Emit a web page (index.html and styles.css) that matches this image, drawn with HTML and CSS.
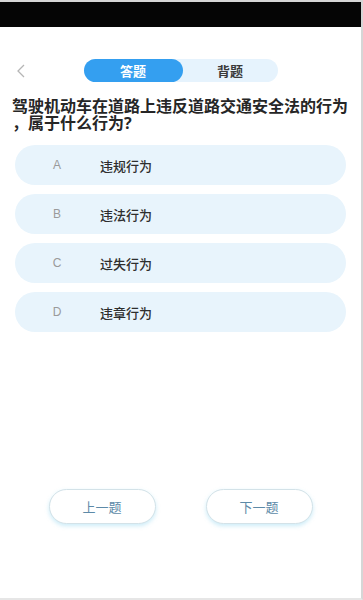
FILE: index.html
```html
<!DOCTYPE html>
<html lang="zh-CN">
<head>
<meta charset="utf-8">
<link rel="stylesheet" href="styles.css">
</head>
<body>
<div class="frame">
  <div class="statusbar"></div>
  <div class="nav">
    <div class="back">
      <svg width="10" height="14" viewBox="0 0 10 14"><path d="M8 1 L2 7 L8 13" fill="none" stroke="#b5b5b5" stroke-width="1.3"/></svg>
    </div>
    <div class="toggle">
      <span class="seg active">答题</span>
      <span class="seg">背题</span>
    </div>
    <div></div>
  </div>
  <div class="question">驾驶机动车在道路上违反道路交通安全法的行为，属于什么行为?</div>
  <div class="options">
    <div class="option"><span class="letter">A</span><span class="text">违规行为</span></div>
    <div class="option"><span class="letter">B</span><span class="text">违法行为</span></div>
    <div class="option"><span class="letter">C</span><span class="text">过失行为</span></div>
    <div class="option"><span class="letter">D</span><span class="text">违章行为</span></div>
  </div>
  <div class="actions">
    <button class="btn">上一题</button>
    <button class="btn">下一题</button>
  </div>
</div>
</body>
</html>
```
FILE: styles.css
```css
html, body {
  margin: 0;
  padding: 0;
  background: #fff;
}
body {
  font-family: "Noto Sans", "Noto Sans CJK SC", sans-serif;
}
.frame {
  box-sizing: border-box;
  width: 363px;
  height: 600px;
  border-top: 2px solid #d6d6d6;
  border-right: 2px solid #d6d6d6;
  border-bottom: 2px solid #e6e6e6;
  display: flex;
  flex-direction: column;
  background: #fff;
}
.statusbar {
  height: 25px;
  background: #050505;
}
.nav {
  display: grid;
  grid-template-columns: 1fr auto 1fr;
  align-items: center;
  padding-top: 32px;
}
.back {
  padding-left: 16px;
  display: flex;
  align-items: center;
}
.back svg { display: block; }
.toggle {
  display: flex;
  background: #e6f3fd;
  border-radius: 12px;
  height: 23px;
  width: 194px;
}
.seg {
  flex: 1;
  display: flex;
  align-items: center;
  justify-content: center;
  font-size: 13px;
  font-weight: 700;
  color: #3a3a3a;
  border-radius: 12px;
}
.seg.active {
  background: #349ff0;
  color: #fff;
  flex: 0 0 99px;
}
.question {
  margin-top: 16px;
  padding: 0 10px 0 12px;
  font-size: 16px;
  line-height: 17px;
  font-weight: 700;
  color: #262626;
  line-break: anywhere;
}
.options {
  margin-top: 13px;
  padding: 0 15px;
  display: flex;
  flex-direction: column;
  gap: 9px;
}
.option {
  height: 40px;
  border-radius: 20px;
  background: #e8f4fc;
  display: flex;
  align-items: center;
  padding-left: 24px;
}
.letter {
  width: 36px;
  text-align: center;
  font-family: "Liberation Sans", sans-serif;
  font-size: 12px;
  color: #9a9a9a;
}
.text {
  margin-left: 25px;
  font-size: 13px;
  font-weight: 500;
  color: #2e2e2e;
}
.actions {
  margin-top: auto;
  padding-bottom: 74px;
  display: flex;
  justify-content: center;
  gap: 50px;
}
.btn {
  width: 107px;
  height: 35px;
  border-radius: 18px;
  border: 1px solid #d3e2e8;
  background: #fff;
  box-shadow: 0 2px 4px rgba(110, 200, 235, 0.35);
  font-family: "Noto Sans", "Noto Sans CJK SC", sans-serif;
  font-size: 13px;
  color: #5d8aa8;
  padding: 0;
}
```
